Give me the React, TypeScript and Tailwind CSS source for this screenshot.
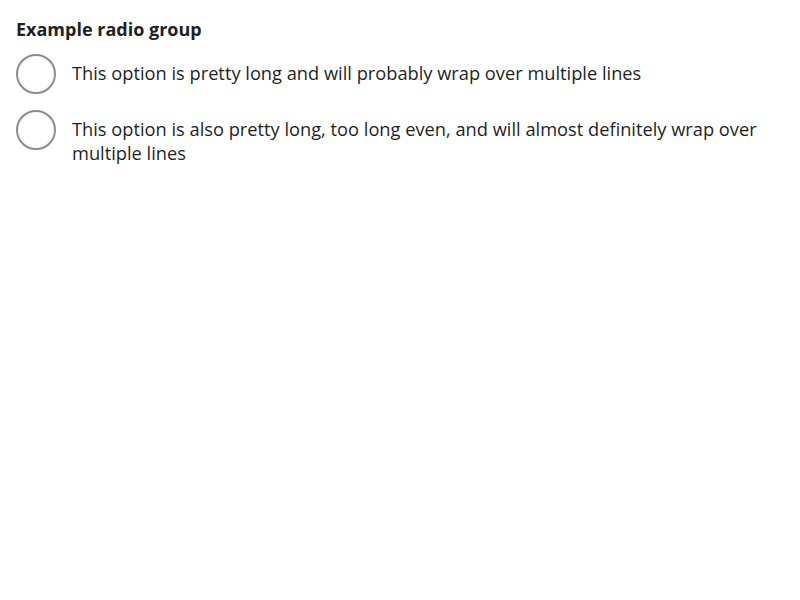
import React from 'react';

const options = [
  'This option is pretty long and will probably wrap over multiple lines',
  'This option is also pretty long, too long even, and will almost definitely wrap over multiple lines',
];

const App = () => {
  return (
    <div className="p-4 font-['Open_Sans',sans-serif] text-[#1f1f1f]">
      <fieldset>
        <legend className="text-[18px] font-bold leading-6 pt-px mb-[13px]">Example radio group</legend>
        <div className="flex flex-col gap-4">
          {options.map((label, i) => (
            <label key={i} className="flex items-start gap-4">
              <span className="w-10 h-10 shrink-0 rounded-full border-2 border-[#8c8c8c] bg-white" />
              <span className="text-[18.25px] leading-6 pt-[7px]">{label}</span>
            </label>
          ))}
        </div>
      </fieldset>
    </div>
  );
};

export default App;
